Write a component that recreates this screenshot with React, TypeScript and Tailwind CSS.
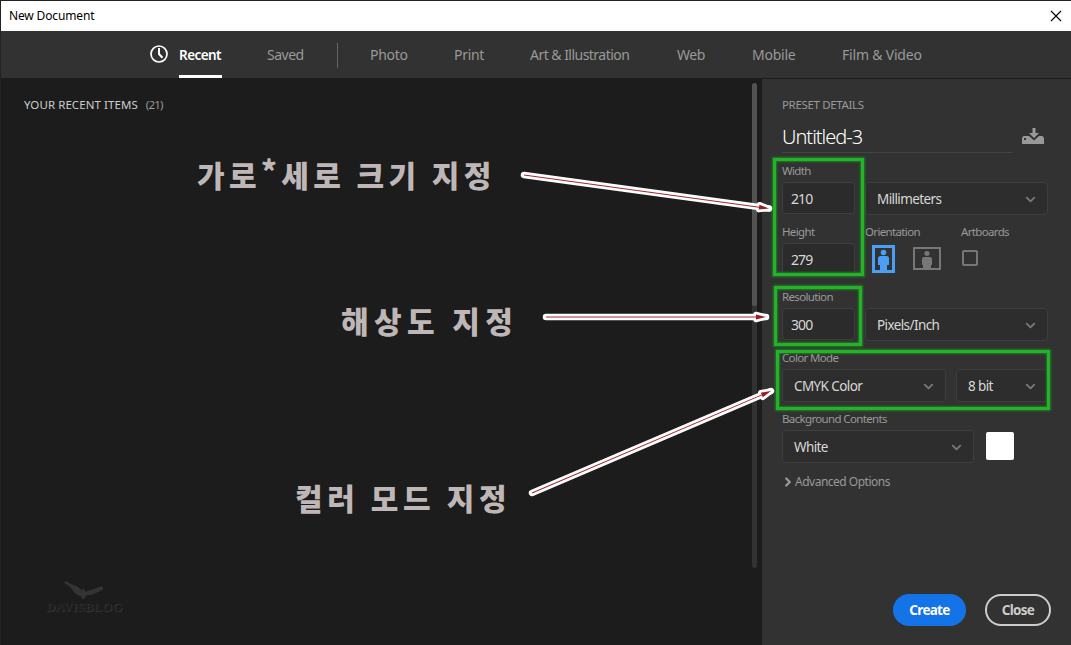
import clsx from "clsx";
import { ChevronDown, ChevronRight } from "lucide-react";

const tabs = [
  { label: "Photo", className: "w-[37px] tracking-[-0.3px]" },
  { label: "Print", className: "w-[29px] tracking-[-0.3px]" },
  { label: "Art & Illustration", className: "w-[100px] tracking-[-0.53px]" },
  { label: "Web", className: "w-[28px] tracking-[-0.5px]" },
  { label: "Mobile", className: "w-[43px] tracking-[-0.25px]" },
  { label: "Film & Video", className: "w-[80px] tracking-[-0.2px]" },
];

const notes = [
  { before: "가로", star: "*", after: "세로 크기 지정", className: "left-[197px] top-[151px] tracking-[4.4px]" },
  { before: "해상도 지정", className: "left-[341px] top-[297px] tracking-[5.4px]" },
  { before: "컬러 모드 지정", className: "left-[295px] top-[474px] tracking-[4.6px]" },
];

const highlights = [
  "left-[773px] top-[158px] h-[118px] w-[91px]",
  "left-[774px] top-[286px] h-[60px] w-[88px]",
  "left-[776px] top-[350px] h-[60px] w-[274px]",
];

function Label({ children, className }: { children: string; className?: string }) {
  return (
    <div
      className={clsx(
        "flex h-[22px] items-center whitespace-nowrap text-[11.5px] tracking-[-0.65px] text-[#999]",
        className,
      )}
    >
      {children}
    </div>
  );
}

function Field({ value }: { value: string }) {
  return (
    <div className="flex h-8 w-[73px] items-center rounded border border-[#3e3e3e] bg-[#2b2b2b] pl-2 text-[14px] tracking-[-0.9px] text-[#d8d8d8]">
      {value}
    </div>
  );
}

function Select({ value, className }: { value: string; className: string }) {
  return (
    <div
      className={clsx(
        "flex h-[33px] items-center justify-between whitespace-nowrap rounded border border-[#3e3e3e] bg-[#2d2d2d] pl-[11px] pr-[9px] pt-px text-[13.5px] tracking-[-0.6px] text-[#d8d8d8]",
        className,
      )}
    >
      {value}
      <ChevronDown className="size-[15px] text-[#777]" strokeWidth={3} />
    </div>
  );
}

function Portrait() {
  return (
    <svg width="23" height="28" viewBox="0 0 23 28" fill="#4a9ff5" className="mb-[2px]">
      <path d="M0 0h23v28H0z M3 3v22h17V3z" fillRule="evenodd" />
      <circle cx="11.5" cy="7.5" r="2.8" />
      <path d="M8.500 11h6a2.500 2.500 0 0 1 2.500 2.500V20h-2v6H8v-6H6v-6.500a2.500 2.500 0 0 1 2.500-2.500z" />
    </svg>
  );
}

function Landscape() {
  return (
    <svg width="28" height="23" viewBox="0 0 28 23" fill="#777" className="mb-[2px]">
      <path d="M0 0h28v23H0z M2 2v19h24V2z" fillRule="evenodd" />
      <circle cx="14" cy="6.500" r="2.600" />
      <path d="M11 10h6a2 2 0 0 1 2 2v6h-1v4h-8v-4H9v-6a2 2 0 0 1 2-2z" />
    </svg>
  );
}

function SaveIcon() {
  return (
    <svg width="22" height="16" viewBox="0 0 22 16" fill="#999">
      <path d="M10.500 0h3v5H17l-5 5-5-5h3.500z" />
      <path d="M1.500 8H7l5 4.500L17 8h3.500L22 10v6H0v-6zM2 10v2h2v-2z" fillRule="evenodd" />
    </svg>
  );
}

function Arrow({ x1, y1, x2, y2 }: { x1: number; y1: number; x2: number; y2: number }) {
  const length = Math.hypot(x2 - x1, y2 - y1);
  const angle = (Math.atan2(y2 - y1, x2 - x1) * 180) / Math.PI;
  const head = `M${length - 10} -2.500L${length} 0L${length - 10} 2.500z`;
  return (
    <g transform={`translate(${x1} ${y1}) rotate(${angle})`}>
      <path d={`M0 0H${length}`} stroke="#fff" strokeWidth="6.500" strokeLinecap="round" />
      <path d={head} fill="#fff" stroke="#fff" strokeWidth="5.500" strokeLinejoin="round" />
      <path d={`M0 0H${length - 8}`} stroke="#a12a30" strokeWidth="1" />
      <path d={head} fill="#9d1c22" />
    </g>
  );
}

export default function App() {
  return (
    <div className="relative flex h-[645px] w-[1071px] flex-col overflow-hidden border-l border-t border-[#242122] bg-[#1c1c1c] font-['Noto_Sans','Noto_Sans_CJK_KR',sans-serif]">
      <header className="flex h-[30px] shrink-0 items-center justify-between bg-white pl-2 pr-[9px] text-xs text-black">
        <span className="tracking-[-0.15px]">New Document</span>
        <svg width="12" height="12" viewBox="0 0 12 12" stroke="#000" strokeWidth="1.100">
          <path d="M1 1l10 10M11 1L1 11" />
        </svg>
      </header>

      <nav className="flex h-[47px] shrink-0 items-center whitespace-nowrap bg-[#323232] pl-[149px] text-[14px] text-[#999]">
        <svg width="18" height="18" viewBox="0 0 18 18" fill="none" stroke="#fff" className="mb-[2px]">
          <circle cx="9" cy="9" r="8" strokeWidth="1.700" />
          <path d="M9 3v6l3.500 3.800" strokeWidth="2" />
        </svg>
        <div className="ml-[11px] flex h-full w-[43px] items-center border-b-[3px] border-white pt-1 text-[13.5px] font-semibold tracking-[-0.55px] text-white">
          Recent
        </div>
        <div className="ml-[45px] w-[37px] tracking-[-0.5px]">Saved</div>
        <div className="ml-[33px] mr-8 mt-0.5 h-[25px] w-px bg-[#666]" />
        <div className="flex gap-[47px]">
          {tabs.map((tab) => (
            <div key={tab.label} className={tab.className}>
              {tab.label}
            </div>
          ))}
        </div>
      </nav>

      <div className="flex min-h-0 flex-1">
        <main className="flex flex-1 justify-between pl-[23px] pr-[5px]">
          <div className="flex gap-2 pt-[18px] text-[11.5px] leading-[18px]">
            <span className="tracking-[0.07px] text-[#ccc]">YOUR RECENT ITEMS</span>
            <span className="tracking-[-0.8px] text-[#999]">(21)</span>
          </div>
          <div className="mt-[5px] h-[485px] w-[5px] rounded-full bg-[#323232]">
            <div className="h-[223px] rounded-full bg-[#535353]" />
          </div>
        </main>

        <aside className="mt-px flex w-[309px] flex-col bg-[#323232] pl-5 pr-5 pt-4">
          <div className="flex h-5 items-center text-[11.5px] tracking-[-0.35px] text-[#999]">PRESET DETAILS</div>
          <div className="flex h-[38px] items-center justify-between">
            <div className="flex h-full w-[230px] items-center border-b border-[#444] pt-[7px] text-[20px] font-[350] tracking-[-1px] text-white">
              Untitled-3
            </div>
            <div className="mr-[7px] mt-[3px]">
              <SaveIcon />
            </div>
          </div>

          <Label className="mt-[7px]">Width</Label>
          <div className="flex h-[33px] gap-[10px]">
            <Field value="210" />
            <Select value="Millimeters" className="w-[183px]" />
          </div>

          <div className="mt-[6px] flex">
            <div className="w-[83px]">
              <Label>Height</Label>
              <Field value="279" />
            </div>
            <div className="w-24">
              <Label>Orientation</Label>
              <div className="flex h-[33px] items-center gap-[18px] pl-[7px]">
                <Portrait />
                <Landscape />
              </div>
            </div>
            <div>
              <Label>Artboards</Label>
              <div className="ml-px mt-[7px] size-4 rounded-[2px] border-2 border-[#777]" />
            </div>
          </div>

          <Label className="mt-[10px]">Resolution</Label>
          <div className="flex h-[33px] gap-[10px]">
            <Field value="300" />
            <Select value="Pixels/Inch" className="w-[183px]" />
          </div>

          <Label className="mt-[6px]">Color Mode</Label>
          <div className="flex gap-[10px]">
            <Select value="CMYK Color" className="w-[164px]" />
            <Select value="8 bit" className="w-[92px]" />
          </div>

          <Label className="mt-[6px]">Background Contents</Label>
          <div className="flex items-center gap-3">
            <Select value="White" className="w-[192px]" />
            <div className="mb-[2px] size-7 rounded-[2px] bg-white" />
          </div>

          <div className="mt-[9px] flex h-5 items-center text-[12px] tracking-[-0.5px] text-[#999]">
            <ChevronRight className="-ml-px size-[14px]" strokeWidth={4} />
            Advanced Options
          </div>

          <div className="mb-[19px] mt-auto flex justify-end gap-[19px] text-[13.5px] font-bold tracking-[-0.7px]">
            <button className="h-8 w-[73px] rounded-full bg-[#1473e6] pt-px text-white">Create</button>
            <button className="h-8 w-[66px] rounded-full border-2 border-[#ccc] pt-px text-[#ccc]">Close</button>
          </div>
        </aside>
      </div>

      {notes.map((note) => (
        <div
          key={note.before}
          className={clsx(
            "absolute -ml-px -mt-px whitespace-nowrap font-['Noto_Sans_CJK_KR',sans-serif] text-[30px] font-black leading-[46px] text-[#bfb7b7]",
            note.className,
          )}
        >
          {note.before}
          {note.star && <span className="relative -top-1">{note.star}</span>}
          {note.after}
        </div>
      ))}

      {highlights.map((box) => (
        <div
          key={box}
          className={clsx(
            "absolute -ml-px -mt-px border-[3px] border-[#25b22a] shadow-[0_0_2px_1px_#1f7d22,inset_0_0_2px_1px_#1f7d22]",
            box,
          )}
        />
      ))}

      <svg className="absolute -left-px -top-px" width="1071" height="645" viewBox="0 0 1071 645" fill="none">
        <Arrow x1={524} y1={175} x2={769} y2={208.5} />
        <Arrow x1={546} y1={317} x2={766} y2={317} />
        <Arrow x1={532} y1={493} x2={771} y2={391} />
      </svg>

      <div className="absolute left-[43px] top-[578px] flex w-20 flex-col items-center">
        <svg width="40" height="22" viewBox="0 0 40 22" fill="#363433">
          <path d="M0 4C1 2 4 2 5 4l9 4c2 1 3 3 4 4l1-3 3 4c5-3 9-3 13-5 3-1 5 0 4 2s-6 3-9 5c-2 1-5 1-7 1l-4 5-2-4c-3 0-5-2-7-4-2-4-5-6-10-9z" />
        </svg>
        <span className="font-['Liberation_Serif',serif] text-[13px] font-bold leading-[12px] text-[#1e1e1e] [text-shadow:1px_1px_1px_#3a3a3a]">
          DAVISBLOG
        </span>
      </div>
    </div>
  );
}
